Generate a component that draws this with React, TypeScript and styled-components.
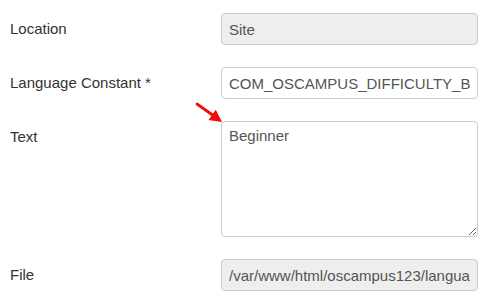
import React from 'react'
import { styled, createGlobalStyle } from 'styled-components'

const GlobalStyle = createGlobalStyle`
    html, body {
        margin: 0;
        padding: 0;
        background: #fff;
    }
    body {
        font-family: 'Liberation Sans', Arial, sans-serif;
        font-size: 15px;
        color: #333;
    }
`

const fields = [
    { label: 'Location', value: 'Site', disabled: true },
    { label: 'Language Constant *', value: 'COM_OSCAMPUS_DIFFICULTY_BEGINNER' },
]

export default function App() {
    return (
        <Form>
            <GlobalStyle />
            {fields.map((f) => (
                <Row key={f.label}>
                    <Label>{f.label}</Label>
                    <Input type="text" value={f.value} readOnly $disabled={f.disabled} />
                </Row>
            ))}
            <Row>
                <Label>Text</Label>
                <Field>
                    <Arrow width="32" height="26" viewBox="0 0 32 26">
                        <line x1="3" y1="3" x2="20" y2="15" stroke="#f20c0c" strokeWidth="2.8" strokeLinecap="round" />
                        <polygon points="28,21 14.5,19 21.8,8.8" fill="#f20c0c" />
                    </Arrow>
                    <TextArea value="Beginner" readOnly />
                </Field>
            </Row>
            <Row>
                <Label>File</Label>
                <Input
                    type="text"
                    value="/var/www/html/oscampus123/language/en-GB/en-GB.com_oscampus.ini"
                    readOnly
                    $disabled
                />
            </Row>
        </Form>
    )
}

const Form = styled.div`
    display: flex;
    flex-direction: column;
    gap: 22px;
    padding: 13px 0 0 10px;
`

const Row = styled.div`
    display: grid;
    grid-template-columns: 211px 257px;
    align-items: start;
`

const Label = styled.div`
    line-height: 20px;
    padding-top: 6px;
    color: #333;
`

const Field = styled.div`
    position: relative;
    display: flex;
`

const Input = styled.input<{ $disabled?: boolean }>`
    box-sizing: border-box;
    width: 257px;
    height: 32px;
    margin: 0;
    padding: 0 7px;
    border: 1px solid #ccc;
    border-radius: 4px;
    background: ${(p) => (p.$disabled ? '#eee' : '#fff')};
    color: #555;
    font-family: inherit;
    font-size: 15px;
    outline: none;
`

const TextArea = styled.textarea`
    box-sizing: border-box;
    width: 257px;
    height: 116px;
    margin: 0;
    padding: 4px 7px;
    border: 1px solid #ccc;
    border-radius: 4px;
    background: #fff;
    color: #555;
    font-family: inherit;
    font-size: 15px;
    line-height: 20px;
    outline: none;
`

const Arrow = styled.svg`
    position: absolute;
    left: -27px;
    top: -20px;
`
